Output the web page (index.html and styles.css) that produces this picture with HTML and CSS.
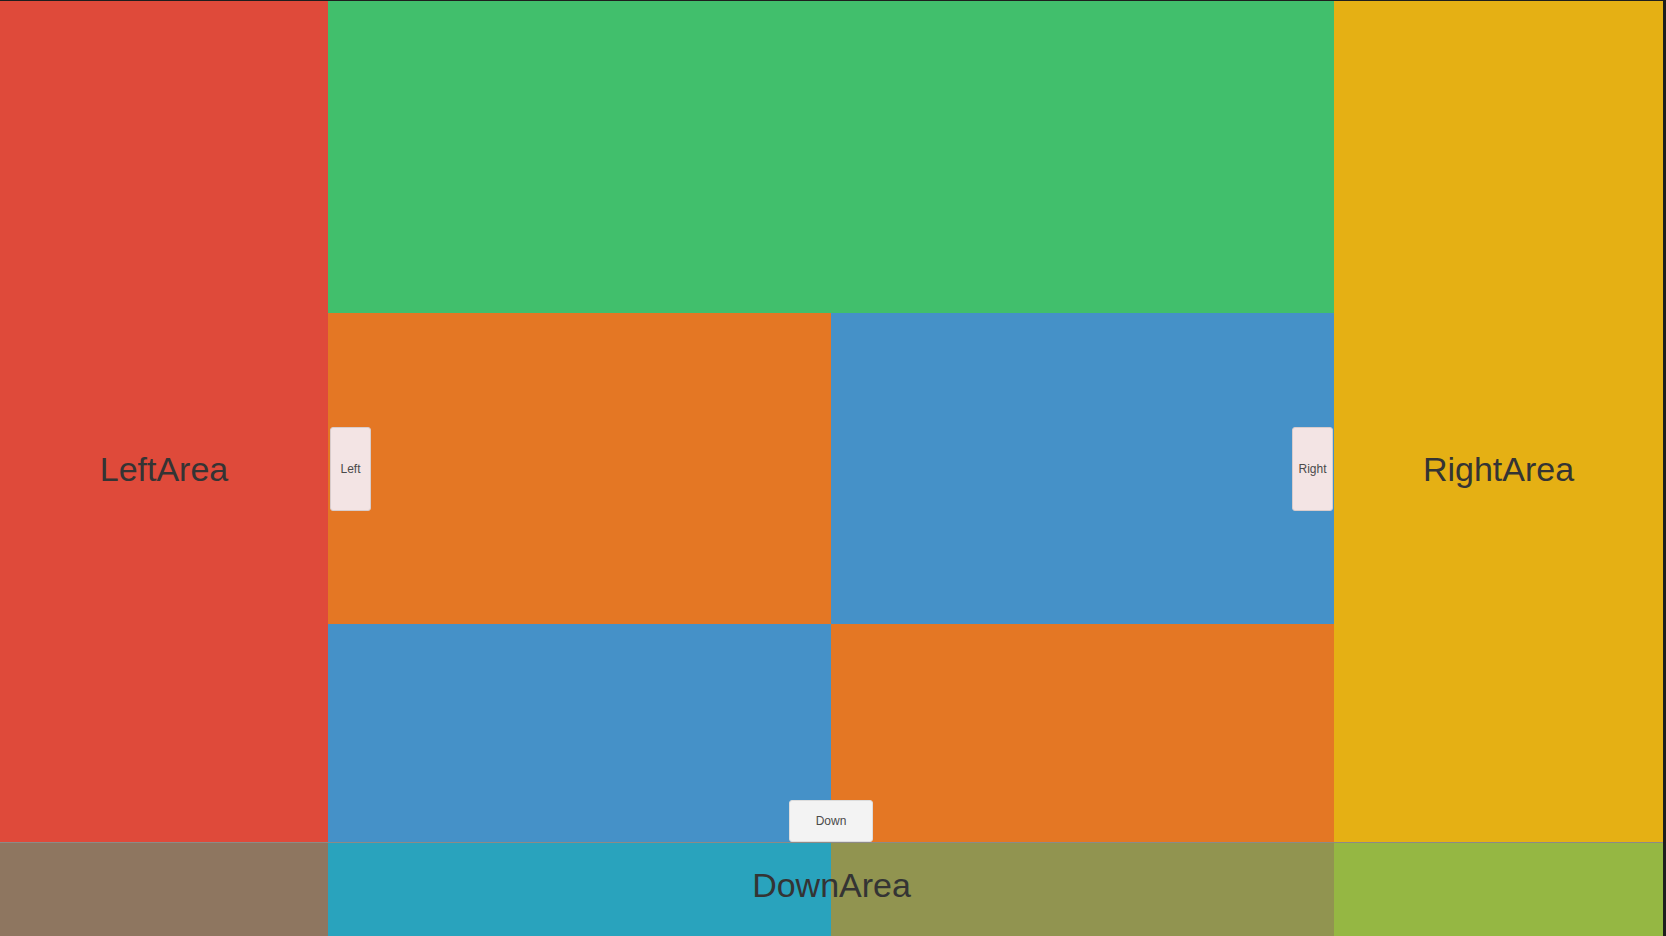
FILE: index.html
```html
<!DOCTYPE html>
<html lang="en">
<head>
    <meta charset="UTF-8">
    <meta name="viewport" content="width=device-width, initial-scale=1.0">
    <title>Areas</title>
    <link rel="stylesheet" href="styles.css">
</head>
<body>

<div class="stage">
    <!-- Left side panel -->
    <div class="side left-area">
        <span class="area-label">LeftArea</span>
    </div>

    <!-- Center grid -->
    <div class="center">
        <div class="cell top"></div>
        <div class="cell orange"></div>
        <div class="cell blue"></div>
        <div class="cell blue"></div>
        <div class="cell orange"></div>

        <button class="tab tab-left">Left</button>
        <button class="tab tab-right">Right</button>
        <button class="tab tab-down">Down</button>
    </div>

    <!-- Right side panel -->
    <div class="side right-area">
        <span class="area-label">RightArea</span>
    </div>

    <!-- Bottom panel, lies over the others -->
    <div class="down-area">
        <div class="seg seg-1"></div>
        <div class="seg seg-2"></div>
        <div class="seg seg-3"></div>
        <div class="seg seg-4"></div>
        <span class="area-label down-label">DownArea</span>
    </div>
</div>

</body>
</html>
```

FILE: styles.css
```css
html, body {
    margin: 0;
    padding: 0;
}
body {
    background-color: #1e1e1e;
    font-family: "Liberation Sans", Arial, sans-serif;
    color: #333;
    overflow: hidden;
}
.stage {
    position: relative;
    display: flex;
    width: 1663px;
    height: 935px;
    margin-top: 1px;
}
.side {
    display: flex;
    align-items: center;
    justify-content: center;
}
.left-area {
    width: 328px;
    background-color: #df4a3a;
}
.right-area {
    width: 329px;
    background-color: #e5b014;
}
.area-label {
    font-size: 34px;
    color: #343434;
    margin-top: 2px;
}
.center {
    position: relative;
    flex: 1;
    display: grid;
    grid-template-columns: 1fr 1fr;
    grid-template-rows: 312px 311px 1fr;
}
.cell.top {
    grid-column: 1 / -1;
    background-color: #41bf6c;
}
.cell.orange {
    background-color: #e47724;
}
.cell.blue {
    background-color: #4591c8;
}
.tab {
    position: absolute;
    font-family: "Liberation Sans", Arial, sans-serif;
    font-size: 12px;
    color: #4a4a4a;
    border: 1px solid #d8cccc;
    border-radius: 3px;
    padding: 0;
    cursor: pointer;
}
.tab-left,
.tab-right {
    top: 426px;
    width: 41px;
    height: 84px;
    background-color: #f3e4e4;
}
.tab-left {
    left: 2px;
}
.tab-right {
    right: 1px;
}
.tab-down {
    left: 461px;
    bottom: 94px;
    width: 84px;
    height: 42px;
    background-color: #f3f3f3;
    border-color: #dddddd;
}
.down-area {
    position: absolute;
    left: 0;
    right: 0;
    bottom: 0;
    height: 94px;
    display: grid;
    grid-template-columns: 328px 503px 503px 329px;
    border-top: 1px solid #8d8a86;
    box-sizing: border-box;
}
.seg {
    grid-row: 1;
}
.seg-1 { grid-column: 1; background-color: #8e7660; }
.seg-2 { grid-column: 2; background-color: #29a3bd; }
.seg-3 { grid-column: 3; background-color: #919450; }
.seg-4 { grid-column: 4; background-color: #95b743; }
.down-label {
    grid-row: 1;
    grid-column: 1 / -1;
    align-self: center;
    justify-self: center;
    margin-top: 0;
    margin-bottom: 8px;
}
```
